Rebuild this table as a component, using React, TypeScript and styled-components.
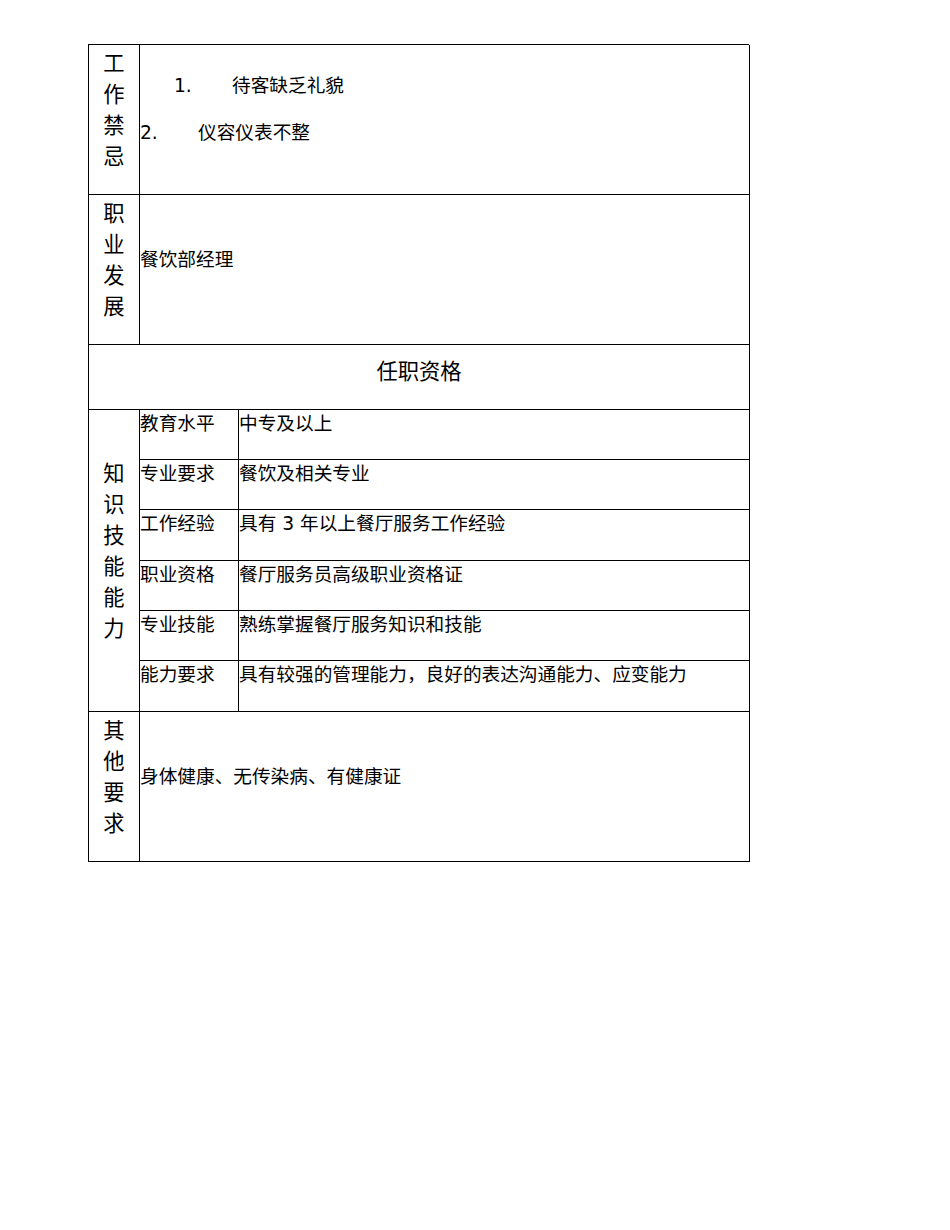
import React from "react";
import styled, { createGlobalStyle } from "styled-components";

const Global = createGlobalStyle`
  html, body { margin: 0; padding: 0; background: #fff; }
  body { font-family: "DejaVu Sans", "Noto Sans CJK SC", sans-serif; color: #000; }
`;

const Page = styled.div`
  width: 950px;
  min-height: 1230px;
  padding: 44px 0 0 88px;
  box-sizing: border-box;
`;

const Table = styled.div`
  display: grid;
  width: 661px;
  grid-template-columns: 51px 99px 511px;
  grid-template-rows: 150px 150px 65px 50px 50px 51px 50px 50px 51px 150px;
  border-top: 1px solid #000;
  border-left: 1px solid #000;
  box-sizing: border-box;
`;

const Cell = styled.div<{ $row: string; $col: string }>`
  grid-row: ${(p) => p.$row};
  grid-column: ${(p) => p.$col};
  border-right: 1px solid #000;
  border-bottom: 1px solid #000;
  box-sizing: border-box;
  min-width: 0;
`;

const LabelCell = styled(Cell)`
  display: flex;
  flex-direction: column;
  align-items: center;
  justify-content: center;
  padding-bottom: 20px;
  font-size: 21.3px;
  line-height: 31px;
`;

const ContentCell = styled(Cell)`
  display: flex;
  flex-direction: column;
  justify-content: center;
  padding-bottom: 20px;
  font-size: 18.67px;
  line-height: 26px;
  gap: 21px;
`;

const HeaderCell = styled(Cell)`
  display: flex;
  align-items: center;
  justify-content: center;
  padding-bottom: 11px;
  font-size: 21.3px;
  line-height: 30px;
`;

const SmallCell = styled(Cell)`
  font-size: 18.67px;
  line-height: 27px;
  white-space: nowrap;
`;

const Item = styled.div<{ $indent: number }>`
  display: flex;
  margin-left: ${(p) => p.$indent}px;
`;

const Num = styled.span`
  width: 58px;
  flex: none;
`;

const VerticalLabel = ({ text, row }: { text: string; row: string }) => (
  <LabelCell $row={row} $col="1">
    {text.split("").map((c, i) => (
      <span key={i}>{c}</span>
    ))}
  </LabelCell>
);

const quals: [string, string][] = [
  ["教育水平", "中专及以上"],
  ["专业要求", "餐饮及相关专业"],
  ["工作经验", "具有 3 年以上餐厅服务工作经验"],
  ["职业资格", "餐厅服务员高级职业资格证"],
  ["专业技能", "熟练掌握餐厅服务知识和技能"],
  ["能力要求", "具有较强的管理能力，良好的表达沟通能力、应变能力"],
];

export default function App() {
  return (
    <Page>
      <Global />
      <Table>
        <VerticalLabel text="工作禁忌" row="1" />
        <ContentCell $row="1" $col="2 / 4">
          <Item $indent={34}>
            <Num>1.</Num>
            <span>待客缺乏礼貌</span>
          </Item>
          <Item $indent={0}>
            <Num>2.</Num>
            <span>仪容仪表不整</span>
          </Item>
        </ContentCell>

        <VerticalLabel text="职业发展" row="2" />
        <ContentCell $row="2" $col="2 / 4">
          <div>餐饮部经理</div>
        </ContentCell>

        <HeaderCell $row="3" $col="1 / 4">任职资格</HeaderCell>

        <VerticalLabel text="知识技能能力" row="4 / 10" />
        {quals.map(([k, v], i) => (
          <React.Fragment key={k}>
            <SmallCell $row={String(4 + i)} $col="2">{k}</SmallCell>
            <SmallCell $row={String(4 + i)} $col="3">{v}</SmallCell>
          </React.Fragment>
        ))}

        <VerticalLabel text="其他要求" row="10" />
        <ContentCell $row="10" $col="2 / 4">
          <div>身体健康、无传染病、有健康证</div>
        </ContentCell>
      </Table>
    </Page>
  );
}
